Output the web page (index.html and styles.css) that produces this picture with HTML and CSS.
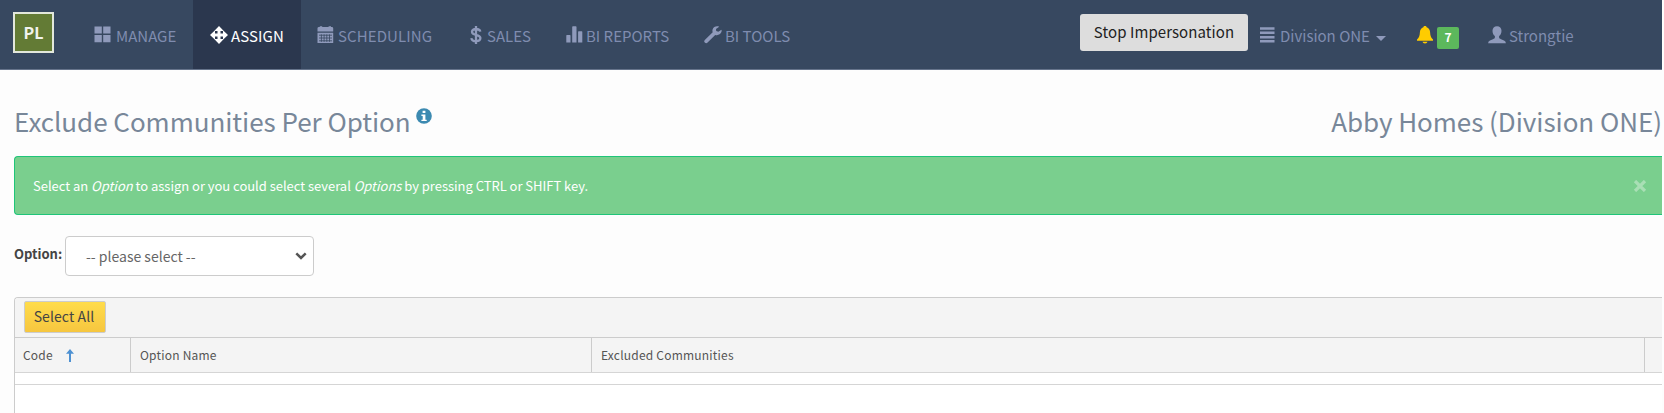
FILE: index.html
```html
<!DOCTYPE html>
<html lang="en">
<head>
<meta charset="utf-8">
<title>Exclude Communities Per Option</title>
<link rel="stylesheet" href="styles.css">
</head>
<body>
<div class="page">
  <header class="navbar">
    <a class="brand"><span class="t">PL</span></a>
    <nav class="menu">
      <a class="item manage"><svg class="icon" width="17" height="17" viewBox="0 0 17 17"><path d="M.5.5h7.300v7H.5zM9.200.5h7.300v7H9.200zM.5 9h7.300v7.300H.5zM9.200 9h7.300v7.300H9.200z"/></svg><span class="t">MANAGE</span></a>
      <a class="item assign active"><svg class="icon" width="18" height="18" viewBox="0 0 18 18"><path d="M9 0l4.800 5H10.500v2.500H13V4.200L18 9l-5 4.800v-3.300h-2.500V13h3.300L9 18l-4.800-5h3.300v-2.500H5v3.300L0 9l5-4.800v3.300h2.500V5H4.200z"/></svg><span class="t">ASSIGN</span></a>
      <a class="item scheduling"><svg class="icon" width="17" height="18" viewBox="0 0 17 18"><path d="M.5 5.500V2.200Q.5 1 2 1h.8V.3h2.400V1h6.400V.3H14V1h.8q1.400 0 1.400 1.200v3.300zM.5 6.700h15.700V17H.5z"/><path class="cut" d="M2 9.200h13M2 12h13M2 14.800h13M4.400 8.400v7.400M7.100 8.400v7.400M9.800 8.400v7.400M12.500 8.400v7.400"/></svg><span class="t">SCHEDULING</span></a>
      <a class="item sales"><svg class="icon" width="12" height="18" viewBox="0 0 12 18"><path class="line" d="M10.300 5.600C10 3.700 8.500 3 6 3 3.600 3 2 3.800 2 5.800c0 2 1.700 2.600 4 3.100 2.600.6 4.400 1.200 4.400 3.200 0 2.200-1.900 3.100-4.400 3.100-2.700 0-4.400-1-4.600-3.100M6 0v18"/></svg><span class="t">SALES</span></a>
      <a class="item reports"><svg class="icon" width="17" height="17" viewBox="0 0 17 17"><path d="M.3 9.500q0-.6.6-.6h3q.6 0 .6.600v7H.3zM6.200 1q0-.7.700-.7h2.900q.7 0 .7.700v15.500H6.200zM12.100 5.800q0-.6.600-.6h3q.6 0 .6.600v10.700h-4.200z"/></svg><span class="t">BI REPORTS</span></a>
      <a class="item tools"><svg class="icon" width="18" height="18" viewBox="0 0 18 18"><path d="M15.200.8C12.600-.4 9.500.8 8.600 3.500c-.3.900-.2 1.800.1 2.700L.8 13.900c-.8.800-.8 1.900 0 2.700.8.800 2 .8 2.800 0l7.600-7.700c2.600.9 5.300-.4 6.200-2.800.2-.7.3-1.500.1-2.300L14.300 5.800 12.200 5l-.2-2z"/></svg><span class="t">BI TOOLS</span></a>
    </nav>
    <div class="tools-right">
      <button class="stop"><span class="t">Stop Impersonation</span></button>
      <a class="division"><svg class="icon" width="15" height="16" viewBox="0 0 15 16"><path d="M0 .3h14.500v2.500H0zM0 4.600h14.500v2.500H0zM0 8.900h14.500v2.500H0zM0 13.100h14.500v2.500H0z"/></svg><span class="t">Division ONE</span><i class="caret"></i></a>
      <a class="alerts"><svg class="bell" width="16" height="18" viewBox="0 0 16 18"><path d="M8 0c1 0 1.500.5 1.600 1.300 2.300.8 3.300 2.600 3.500 4.900.2 3.200.6 5.300 2.900 7.300v1.300H0v-1.300c2.300-2 2.700-4.100 2.900-7.300C3.100 3.900 4.100 2.100 6.400 1.300 6.500.5 7 0 8 0zM5.500 15.700h5Q10.200 17.500 8 17.500T5.500 15.700z"/></svg><span class="badge"><span class="t">7</span></span></a>
      <a class="user"><svg class="icon" width="18" height="18" viewBox="0 0 18 18"><path d="M9 .2c2.800 0 4.500 1.800 4.500 4.500 0 2.500-1 4.300-2.400 5.300v1.200c0 1 .7 1.400 2 2l2.900 1.200q1.800.8 1.900 2.800H.1q.1-2 1.900-2.800l2.900-1.200c1.300-.6 2-1 2-2V10C5.500 9 4.500 7.200 4.500 4.700 4.500 2 6.200.2 9 .2z"/></svg><span class="t">Strongtie</span></a>
    </div>
  </header>

  <main class="content">
    <div class="titles">
      <h1 class="title"><span class="t">Exclude Communities Per Option</span><svg class="info" width="16" height="16" viewBox="0 0 16 16"><circle cx="8" cy="8" r="7.800"/><path d="M6.600 2.800h2.800v2.300H6.600zM5.400 6.500h4v5.200h1.300v1.400H5.400v-1.400h1.300V7.900H5.400z"/></svg></h1>
      <h1 class="builder"><span class="t">Abby Homes (Division ONE)</span></h1>
    </div>

    <div class="notice">
      <span class="t">Select an <em>Option</em> to assign or you could select several <em>Options</em> by pressing CTRL or SHIFT key.</span>
      <svg class="close" width="14" height="12" viewBox="0 0 14 12"><path d="M2 1l10 10M12 1L2 11"/></svg>
    </div>

    <div class="filter">
      <label class="label"><span class="t">Option:</span></label>
      <div class="select"><span class="t">-- please select --</span><svg width="12" height="8" viewBox="0 0 12 8"><path d="M1.300 1.300L6 5.900l4.700-4.600"/></svg></div>
    </div>

    <section class="grid">
      <div class="toolbar"><button class="select-all"><span class="t">Select All</span></button></div>
      <div class="head">
        <div class="cell"><span class="t">Code</span><svg class="sort" width="8" height="13" viewBox="0 0 8 13"><path d="M4 0l4 4.800H5V13H3V4.800H0z"/></svg></div>
        <div class="cell"><span class="t">Option Name</span></div>
        <div class="cell"><span class="t">Excluded Communities</span></div>
        <div class="cell"></div>
      </div>
      <div class="row"></div>
    </section>
  </main>
</div>
</body>
</html>
```
FILE: styles.css
```css
* { box-sizing: border-box; }
body {
  margin: 0;
  background: #fdfdfd;
  font-family: "Noto Sans CJK SC", "Open Sans", sans-serif;
  font-size: 14px;
  overflow: hidden;
}
.page { width: 1662px; height: 413px; overflow: hidden; display: flex; flex-direction: column; }
.t { white-space: nowrap; line-height: 20px; }
button { font: inherit; margin: 0; padding: 0; }
svg { flex: none; display: block; }

.navbar { display: flex; height: 70px; flex: none; background: #374860; border-bottom: 1px solid #66748b; color: #7f8caf; }
.brand { width: 41px; height: 41px; margin: 12px 0 0 13px; display: flex; align-items: center; justify-content: center; background: #637b35; border: 2px solid #e3e8dc; color: #f1f3ee; font-weight: 700; font-size: 16px; padding-bottom: 2px; }
.menu { display: flex; margin-left: 27px; }
.item { display: flex; align-items: flex-start; padding-top: 26px; height: 69px; font-size: 15px; }
.icon { fill: #8f9abb; }
.icon .cut { stroke: #374860; stroke-width: .8; fill: none; }
.icon .line { stroke: #8f9abb; stroke-width: 2.300; fill: none; }
.manage { width: 112px; padding-left: 13px; gap: 5px; }
.assign { width: 108px; padding-left: 17px; gap: 3px; letter-spacing: .1px; }
.active { background: #2b374e; color: #fff; }
.active .icon { fill: #fff; }
.scheduling { width: 152px; padding-left: 16px; gap: 4px; letter-spacing: .1px; }
.sales { width: 96px; padding-left: 17px; gap: 5px; }
.reports { width: 138px; padding-left: 17px; gap: 3px; }
.tools { width: 105px; padding-left: 17px; gap: 3px; }

.tools-right { display: flex; margin-left: auto; width: 582px; }
.stop { width: 168px; height: 37px; margin-top: 13.500px; padding-bottom: 2px; background: #ddd; border: 0; border-radius: 3px; color: #222; font-size: 15px; letter-spacing: .08px; }
.division, .alerts, .user { display: flex; padding-top: 26px; font-size: 15px; }
.division { margin-left: 12px; width: 157px; gap: 5px; }
.division .icon { margin-top: 1px; }
.caret { width: 0; height: 0; margin: 10px 0 0 1px; border: 5px solid transparent; border-top-color: #8f9abb; border-bottom: 0; }
.alerts { width: 71px; gap: 4px; }
.bell { fill: #fc0; }
.badge { width: 22px; height: 22px; margin-top: 1px; background: #5cb85c; border-radius: 2px; color: #fff; font-weight: 700; font-size: 12px; text-align: center; }
.user { gap: 3px; }

.content { padding-left: 14px; display: flex; flex-direction: column; }
.titles { display: flex; justify-content: space-between; height: 86px; padding-top: 36px; }
h1 { display: flex; margin: 0; font-size: 26px; font-weight: 400; color: #788799; letter-spacing: -.04px; }
h1 .t { line-height: 30px; }
.info { fill: #3c8ab1; margin: 2px 0 0 5px; }
.info path { fill: #fff; }

.notice { display: flex; align-items: center; height: 59px; border: 1px solid #1fc579; border-right: 0; border-radius: 4px 0 0 4px; background: #7acf8e; color: #fff; font-size: 13px; padding: 0 15px 0 18px; justify-content: space-between; letter-spacing: -.025px; }
.close path { stroke: #a9dfb5; stroke-width: 3.200; }
.filter { display: flex; height: 82px; padding-top: 21px; }
.label { width: 51px; padding-top: 8px; font-weight: 700; font-size: 13px; color: #444; }
.select { width: 249px; height: 40px; border: 1px solid #ccc; border-radius: 4px; background: #fff; color: #666; display: flex; align-items: center; justify-content: space-between; padding: 0 6px 0 20px; }
.select path { fill: none; stroke: #555; stroke-width: 2.500; }

.grid { height: 130px; border: 1px solid #ccc; border-right: 0; border-radius: 4px 0 0; background: #fff; overflow: hidden; }
.toolbar { height: 40px; padding: 3px 9px; background: #f4f4f4; border-bottom: 1px solid #ccc; }
.select-all { width: 82px; height: 32px; display: flex; align-items: center; justify-content: center; padding: 0 2px 2px 0; border: 1px solid #ccc; background: linear-gradient(#ffdc4b, #f6c63f); border-radius: 2px; color: #444; font-size: 14px; letter-spacing: .1px; }
.head { display: grid; grid-template-columns: 116px 461px 1053px 1fr; height: 35px; background: #f4f4f4; border-bottom: 1px solid #d5d5d5; color: #555; font-size: 12px; letter-spacing: .21px; }
.cell { display: flex; align-items: center; border-right: 1px solid #ccc; padding-left: 9px; }
.cell:first-child { padding-left: 8px; }
.cell:last-child { border-right: 0; }
.sort { margin-left: 13px; fill: #4e91d2; }
.row { height: 12px; border-bottom: 1px solid #d5d5d5; }
```
